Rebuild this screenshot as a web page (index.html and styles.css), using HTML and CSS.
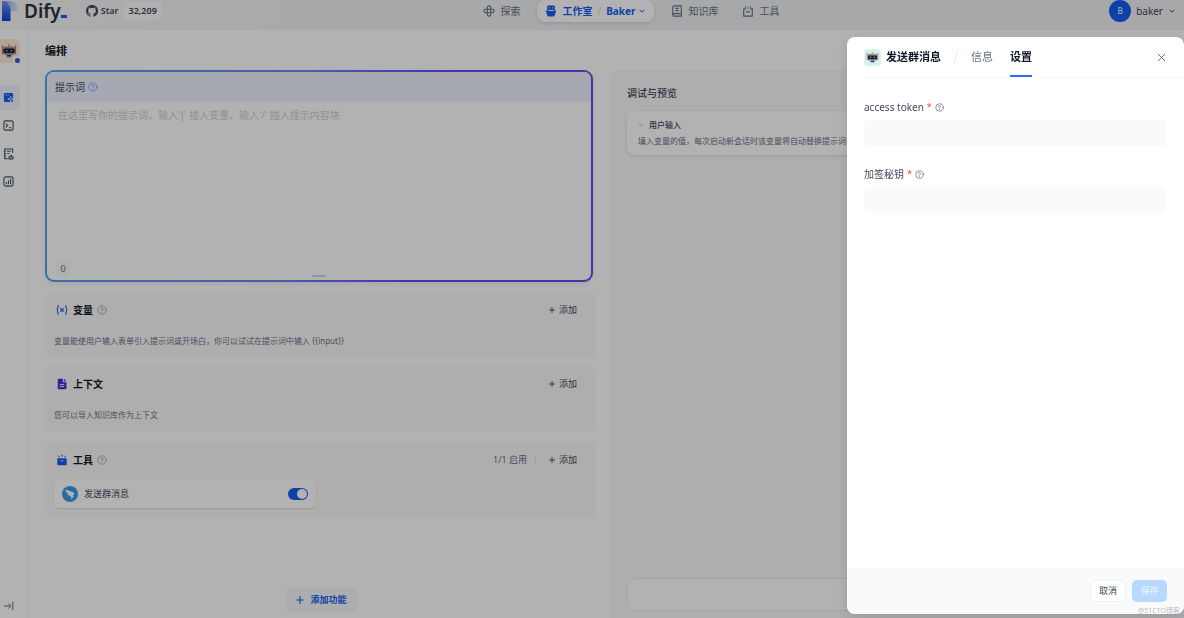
FILE: index.html
```html
<!DOCTYPE html>
<html lang="zh-CN">
<head>
<meta charset="utf-8">
<meta name="viewport" content="width=device-width, initial-scale=1">
<title>Dify</title>
<link rel="stylesheet" href="styles.css">
</head>
<body>
<svg class="defs" aria-hidden="true">
  <symbol id="help" viewBox="0 0 12 12"><g fill="none" stroke="currentColor" stroke-linecap="round"><circle cx="6" cy="6" r="5"/><path d="M4.6 4.8a1.4 1.4 0 1 1 2 1.3c-.4.2-.6.4-.6.8M6 8.600v.1"/></g></symbol>
  <symbol id="plus" viewBox="0 0 12 12"><path d="M6 1.500v9M1.500 6h9" fill="none" stroke="currentColor" stroke-width="1.400"/></symbol>
  <symbol id="chevron" viewBox="0 0 12 12"><path d="M2.500 4.200 6 7.800l3.500-3.600" fill="none" stroke="currentColor" stroke-width="1.500"/></symbol>
  <symbol id="bot" viewBox="0 0 16 16"><path d="M8 1v3" stroke="#f2b632" stroke-width="2"/><path d="M1.500 2.500V11M14.500 2.500V11" stroke="#e2574f" stroke-width="1.200"/><rect x="2" y="3.500" width="12" height="8.500" rx="2" fill="#8b9aab"/><path d="M4.500 12h7l-1.500 3H6z" fill="#bcc5d0"/><rect x="2.500" y="5.500" width="11" height="4.500" rx="1.500" fill="#18222f"/><circle cx="5.800" cy="7.800" r=".9" fill="#67b5c5"/><circle cx="10.200" cy="7.800" r=".9" fill="#67b5c5"/><path d="M6 12.800h4" stroke="#27324a" stroke-width="1.400"/></symbol>
  <symbol id="toolbox" viewBox="0 0 14 14"><path d="M2 4.500h2.500M9.500 4.500H12V13H2V4.500M5 8h4M7 4.500V2.500M4.500 3 3.700 1.500M9.500 3l.8-1.500" fill="none" stroke="currentColor" stroke-width="1.300" stroke-linejoin="round"/></symbol>
</svg>

<header class="topbar">
  <div class="brand">
    <a class="logo" href="#" aria-label="Dify">
      <svg width="17" height="22" viewBox="0 0 17 22" aria-hidden="true">
        <defs><linearGradient id="g1" x1="0" y1="0" x2="0" y2="1"><stop offset="0" stop-color="#6f95f5"/><stop offset="1" stop-color="#0b3fd0"/></linearGradient><linearGradient id="g2" x1="0" y1="0" x2="1" y2="0"><stop offset="0" stop-color="#7d9ef0"/><stop offset="1" stop-color="#e8edf9"/></linearGradient></defs>
        <path d="M0 1h7c6 0 10 4 10 10H8V21H0z" fill="url(#g2)"/><path d="M0 1h3c4 3 5.500 6 5.500 10v10H0z" fill="url(#g1)"/>
      </svg>
      <span class="wordmark">Dify</span><span class="cursor"></span>
    </a>
    <a class="star" href="#">
      <svg width="12" height="12" viewBox="0 0 16 16" aria-hidden="true"><path fill="currentColor" d="M8 0C3.580 0 0 3.580 0 8c0 3.540 2.290 6.530 5.470 7.590.4.070.55-.17.55-.38v-1.340c-2.230.48-2.700-1.070-2.700-1.070-.36-.92-.89-1.170-.89-1.170-.73-.5.050-.49.050-.49.810.06 1.230.83 1.230.83.720 1.230 1.880.87 2.340.67.070-.52.280-.87.5-1.070-1.780-.2-3.640-.89-3.640-3.950 0-.87.310-1.590.82-2.150-.08-.2-.36-1.020.08-2.120 0 0 .67-.21 2.200.82a7.600 7.600 0 0 1 4 0c1.530-1.040 2.200-.82 2.200-.82.440 1.100.160 1.920.080 2.120.51.560.820 1.270.820 2.150 0 3.070-1.870 3.750-3.650 3.950.290.250.540.730.540 1.480v2.150c0 .21.150.46.550.38A8 8 0 0 0 8 0z"/></svg>
      <span>Star</span><span class="count">32,209</span>
    </a>
  </div>
  <nav class="nav">
    <a class="nav-item" href="#"><svg width="12" height="12" viewBox="0 0 14 14" fill="none" stroke="currentColor" stroke-width="1.300" aria-hidden="true"><path d="M5 5V3a2 2 0 1 1 4 0v2h2a2 2 0 1 1 0 4H9v2a2 2 0 1 1-4 0V9H3a2 2 0 1 1 0-4zM5 5h4v4H5z"/></svg>探索</a>
    <div class="nav-pill">
      <a href="#"><svg width="12" height="12" viewBox="0 0 14 14" aria-hidden="true"><path d="M2.500 2A1.500 1.500 0 0 1 4 .5h6A1.500 1.500 0 0 1 11.500 2v4h-9z" fill="currentColor"/><path d="M1 6.500h12v2h-1v1A4 4 0 0 1 8 13.500H6a4 4 0 0 1-4-4v-1H1z" fill="currentColor"/><path d="M5 2.500v1.500M9 2.500v1.500M4 6.300h6" stroke="#fff"/></svg>工作室</a>
      <span class="slash">/</span>
      <button type="button">Baker<svg width="8" height="8" aria-hidden="true"><use href="#chevron"/></svg></button>
    </div>
    <a class="nav-item knowledge" href="#"><svg width="12" height="12" viewBox="0 0 14 14" fill="none" stroke="currentColor" stroke-width="1.300" aria-hidden="true"><path d="M12 10V1H3.500A1.500 1.500 0 0 0 2 2.500v9A1.500 1.500 0 0 0 3.500 13H12v-3H3.500A1.500 1.500 0 0 0 2 11.500M5 4h4M5 6.500h4"/></svg>知识库</a>
    <a class="nav-item" href="#"><svg width="12" height="12" aria-hidden="true"><use href="#toolbox"/></svg>工具</a>
  </nav>
  <button class="account" type="button"><span class="avatar">B</span>baker<svg width="8" height="8" aria-hidden="true"><use href="#chevron"/></svg></button>
</header>

<div class="shell">
  <aside class="rail">
    <div class="app-icon"><svg width="16" height="16" aria-hidden="true"><use href="#bot"/></svg><span class="app-mode"></span></div>
    <nav class="rail-nav">
      <a class="active" href="#" aria-label="编排"><svg width="11" height="11" viewBox="0 0 12 12" aria-hidden="true"><path d="M2.500 1h7A1.500 1.500 0 0 1 11 2.500v7A1.500 1.500 0 0 1 9.500 11h-7A1.500 1.500 0 0 1 1 9.500v-7A1.500 1.500 0 0 1 2.500 1z" fill="currentColor"/><path d="M3 3.200h1.500M5.500 3.200h.8" stroke="#fff"/><path d="m8.500 4.500.8 2.400 2.400.8-2.400.8-.8 2.400-.8-2.400-2.400-.8 2.400-.8z" fill="currentColor" stroke="#fff" stroke-width=".8"/></svg></a>
      <a href="#" aria-label="访问 API"><svg width="11" height="11" viewBox="0 0 12 12" fill="none" stroke="currentColor" stroke-width="1.200" aria-hidden="true"><rect x="1" y="1" width="10" height="10" rx="1.500"/><path d="m3 4 2 2-2 2M6.500 8.500H9"/></svg></a>
      <a href="#" aria-label="日志与标注"><svg width="11" height="12" viewBox="0 0 12 13" fill="none" stroke="currentColor" stroke-width="1.200" aria-hidden="true"><path d="M10.500 5V1H2v10.500h3M1 3.500h2M1 6h2M1 8.500h2M4.500 3.500h4M4.500 6H7"/><path d="M6.500 11.800V9.700h1L8.500 8c1-.2 1.200.7.800 1.700h1.900l-.5 2.100z"/></svg></a>
      <a href="#" aria-label="概览"><svg width="11" height="11" viewBox="0 0 12 12" fill="none" stroke="currentColor" stroke-width="1.200" aria-hidden="true"><rect x="1" y="1" width="10" height="10" rx="2"/><path d="M3.700 6.500V9M6 5v4M8.300 3v6"/></svg></a>
    </nav>
    <button class="expand" type="button" aria-label="展开"><svg width="10" height="10" viewBox="0 0 12 12" fill="none" stroke="currentColor" stroke-width="1.200" aria-hidden="true"><path d="M0 6h8M5 2.800 8.200 6 5 9.200M10.500 1v10"/></svg></button>
  </aside>

  <main class="main">
    <h1 class="page-title">编排</h1>
    <div class="columns">
      <div class="config">
        <section class="prompt">
          <div class="prompt-inner">
            <label class="prompt-head" for="prompt">提示词<svg width="10" height="10" aria-hidden="true"><use href="#help"/></svg></label>
            <textarea id="prompt" placeholder="在这里写你的提示词，输入'{' 插入变量、输入'/' 插入提示内容块"></textarea>
            <div class="prompt-foot"><span class="chars">0</span><span class="grip"></span></div>
          </div>
        </section>

        <section class="card">
          <div class="card-head">
            <svg class="indigo" width="12" height="12" viewBox="0 0 14 14" fill="none" stroke="currentColor" stroke-width="1.400" aria-hidden="true"><path d="M3.500 2C2 2 2 3.500 2 4.500S1.500 7 .7 7C1.500 7 2 8.500 2 9.500S2 12 3.500 12M10.500 2C12 2 12 3.500 12 4.500s.5 2.500 1.300 2.500C12.500 7 12 8.500 12 9.500s0 2.500-1.500 2.500M5 5l4 4M9 5 5 9"/></svg>
            <h2>变量</h2><svg class="hint" width="10" height="10" aria-hidden="true"><use href="#help"/></svg>
            <div class="card-actions"><button class="add" type="button"><svg width="8" height="8" aria-hidden="true"><use href="#plus"/></svg>添加</button></div>
          </div>
          <p>变量能使用户输入表单引入提示词或开场白，你可以试试在提示词中输入 {{input}}</p>
        </section>

        <section class="card">
          <div class="card-head">
            <svg class="violet" width="12" height="12" viewBox="0 0 14 14" aria-hidden="true"><path d="M3.500.8H8v4.200h4.200v6.700a1.500 1.500 0 0 1-1.500 1.500H3.500A1.500 1.500 0 0 1 2 11.700V2.300A1.500 1.500 0 0 1 3.500.8zM9.200.9 12 3.800H9.200z" fill="currentColor"/><path d="M4.500 7.500h5M4.500 10h5" stroke="#fff" stroke-width="1.100"/></svg>
            <h2>上下文</h2>
            <div class="card-actions"><button class="add" type="button"><svg width="8" height="8" aria-hidden="true"><use href="#plus"/></svg>添加</button></div>
          </div>
          <p>您可以导入知识库作为上下文</p>
        </section>

        <section class="card tools">
          <div class="card-head">
            <svg class="blue" width="12" height="12" viewBox="0 0 14 14" aria-hidden="true"><path d="M1.500 5h11v7a1 1 0 0 1-1 1h-9a1 1 0 0 1-1-1z" fill="currentColor"/><path d="M5.500 8h3" stroke="#fff"/><path d="M4 3.500 3 2M7 2.800V.8M10 3.500l1-1.500" stroke="currentColor" stroke-width="1.300"/></svg>
            <h2>工具</h2><svg class="hint" width="10" height="10" aria-hidden="true"><use href="#help"/></svg>
            <div class="card-actions"><span class="enabled">1/1 启用</span><button class="add" type="button"><svg width="8" height="8" aria-hidden="true"><use href="#plus"/></svg>添加</button></div>
          </div>
          <div class="tool">
            <svg width="16" height="16" viewBox="0 0 16 16" aria-hidden="true"><circle cx="8" cy="8" r="8" fill="#3a9be8"/><path d="M3.500 3.500c3 1.200 5.500 1.800 8.500 3.200.6.300.3 1-.1 1.700L10.800 10H12l-3 3.500.6-2.300H8.300l.5-1.200C6.500 9.800 5.500 8.700 5.200 7.800l1.300.1C4.500 7 3.700 5.500 3.500 3.500z" fill="#fff"/></svg>
            <label for="tool-on">发送群消息</label>
            <input id="tool-on" class="switch" type="checkbox" role="switch" checked>
          </div>
        </section>

        <button class="add-feature" type="button"><svg width="10" height="10" aria-hidden="true"><use href="#plus"/></svg>添加功能</button>
      </div>

      <section class="preview">
        <h2>调试与预览</h2>
        <div class="inputs-card">
          <h3><svg width="6" height="6" aria-hidden="true"><use href="#chevron"/></svg>用户输入</h3>
          <p>填入变量的值，每次启动新会话时该变量将自动替换提示词中的变量。</p>
        </div>
        <input class="chat" type="text" aria-label="消息">
      </section>
    </div>
  </main>
</div>

<div class="backdrop">
  <div class="drawer" role="dialog" aria-label="发送群消息">
    <div class="drawer-head">
      <span class="drawer-icon"><svg width="13" height="13" aria-hidden="true"><use href="#bot"/></svg></span>
      <h2>发送群消息</h2>
      <svg class="divider" width="6" height="14" viewBox="0 0 6 14" aria-hidden="true"><path d="M5 0 1 14" stroke="#e7e9ec"/></svg>
      <button class="tab" type="button">信息</button>
      <button class="tab active" type="button">设置</button>
      <button class="close" type="button" aria-label="关闭"><svg width="9" height="9" viewBox="0 0 9 9" aria-hidden="true"><path d="m1 1 7 7M8 1 1 8" stroke="currentColor"/></svg></button>
    </div>
    <form class="form">
      <div class="field">
        <label for="token">access token <span class="req">*</span><svg width="9" height="9" aria-hidden="true"><use href="#help"/></svg></label>
        <input id="token" type="text">
      </div>
      <div class="field">
        <label for="secret">加签秘钥 <span class="req">*</span><svg width="9" height="9" aria-hidden="true"><use href="#help"/></svg></label>
        <input id="secret" type="text">
      </div>
    </form>
    <div class="drawer-foot">
      <button class="cancel" type="button">取消</button>
      <button class="save" type="button">保存</button>
    </div>
  </div>
  <span class="watermark">@51CTO博客</span>
</div>
</body>
</html>
```
FILE: styles.css
```css
* { box-sizing: border-box; }
html, body { height: 100%; }
body {
  margin: 0;
  display: flex;
  flex-direction: column;
  overflow: hidden;
  background: #fff;
  color: #414a5a;
  font: 10px/16px "Noto Sans", "Noto Sans CJK SC", sans-serif;
}
h1, h2, h3, p { margin: 0; font-size: inherit; }
a { color: inherit; text-decoration: none; }
button { border: 0; padding: 0; background: none; color: inherit; font: inherit; }
input, textarea { font: inherit; }
svg { flex: none; }
.defs { position: absolute; width: 0; height: 0; }

.topbar {
  flex: none;
  display: flex;
  justify-content: space-between;
  align-items: center;
  height: 30px;
  padding: 0 8px 8px 2px;
  background: linear-gradient(90deg, #f6f6f8, #f0f1f4 50%, #f1f1f4);
}
.brand, .logo, .star, .nav, .nav-item, .nav-pill, .nav-pill a, .nav-pill button, .account { display: flex; align-items: center; }
.brand { gap: 19px; }
.wordmark { margin-left: 5px; color: #2c3340; font-size: 19px; line-height: 22px; font-weight: 600; }
.cursor { align-self: flex-end; width: 6px; height: 3px; margin-bottom: 4px; background: #155eef; }
.star { gap: 3px; font-size: 9px; font-weight: 600; }
.count { margin-left: 2px; padding: 1px 5px; border-radius: 3px; background: #fcfcfd; }
.nav { gap: 17px; margin-right: 8px; color: #667085; }
.nav-item { gap: 5px; }
.knowledge { margin-right: 7px; }
.nav-pill { gap: 5px; height: 22px; padding: 0 8px; border-radius: 8px; background: #fff; box-shadow: 0 1px 4px #10182826; color: #155eef; font-weight: 700; }
.nav-pill a { gap: 5px; }
.nav-pill button { gap: 3px; }
.slash { color: #d0d5dd; font-weight: 400; }
.account { gap: 5px; }
.avatar { width: 22px; height: 22px; border-radius: 50%; background: #155eef; color: #fff; font-size: 8px; line-height: 22px; text-align: center; }

.shell { flex: 1; min-height: 0; display: flex; }
.rail { flex: none; width: 29px; display: flex; flex-direction: column; border-right: 1px solid #f1f2f4; color: #475467; }
.app-icon { position: relative; width: 20px; height: 24px; margin-top: 9px; padding: 4px 1px; border-radius: 0 6px 6px 0; background: #ffead5; }
.app-mode { position: absolute; right: -2px; bottom: -2px; width: 9px; height: 9px; border: 2px solid #fff; border-radius: 50%; background: #444ce7; }
.rail-nav { display: flex; flex-direction: column; gap: 3px; margin-top: 22px; }
.rail-nav a { display: flex; align-items: center; width: 20px; height: 25px; padding-left: 3px; border-radius: 0 5px 5px 0; }
.rail-nav .active { background: #f0f5fe; color: #155eef; }
.expand { width: 18px; height: 16px; margin: auto 0 3px; color: #667085; }

.main { flex: 1; min-width: 0; display: flex; flex-direction: column; padding-left: 16px; }
.page-title { margin: 13px 0 11px; color: #101828; font-size: 11px; }
.columns { flex: 1; min-height: 0; display: grid; grid-template-columns: 48fr 50fr; gap: 14px; }
.config { display: flex; flex-direction: column; gap: 10px; }
.prompt { margin-right: 3px; padding: 2px; border-radius: 9px; background: linear-gradient(100deg, #53a5f0, #6f84f5 45%, #6548f0 70%); box-shadow: 0 2px 4px #10182812; }
.prompt-inner { display: flex; flex-direction: column; height: 208px; border-radius: 7px; background: #fff; overflow: hidden; }
.prompt-head { display: flex; align-items: center; gap: 3px; height: 30px; padding: 0 8px; background: #eef2ff; }
.prompt-head svg { color: #8098f9; }
.prompt textarea { flex: 1; padding: 5px 11px; border: 0; outline: 0; resize: none; background: none; }
.prompt textarea::placeholder { color: #cbd0d8; }
.prompt-foot { display: grid; grid-template-columns: 1fr auto 1fr; align-items: end; height: 24px; padding: 0 9px 3px; }
.chars { width: 14px; border-radius: 5px; background: #f8f9fa; color: #667085; font-size: 9px; text-align: center; }
.grip { width: 14px; height: 2px; border-radius: 1px; background: #d0d5dd; }

.card { min-height: 66px; padding: 10px 19px 8px 9px; border-radius: 8px; background: #fafafb; }
.card + .card { margin-top: -2px; }
.card.tools { min-height: 76px; margin-top: 0; }
.card-head { display: flex; align-items: center; gap: 4px; padding-left: 2px; }
.card-head h2 { margin-left: 1px; color: #101828; }
.card p { margin-top: 15px; color: #667085; font-size: 8px; }
.hint { color: #98a2b3; }
.indigo { color: #3568ef; }
.violet { color: #5925dc; }
.blue { color: #155eef; }
.card-actions { display: flex; align-items: center; margin-left: auto; font-size: 9px; }
.enabled { margin-right: 12px; padding-right: 8px; border-right: 1px solid #e4e7ec; line-height: 10px; color: #667085; }
.add { display: flex; align-items: center; gap: 3px; }
.tool { display: flex; align-items: center; gap: 6px; width: 50%; height: 29px; margin-top: 11px; padding: 0 8px; border-radius: 5px; background: #fff; box-shadow: 0 1px 2px #1018281f; font-size: 9px; }
.switch { appearance: none; display: flex; justify-content: flex-end; width: 20px; height: 12px; margin: 0 0 0 auto; padding: 1px; border-radius: 6px; background: #155eef; }
.switch::before { content: ""; width: 10px; height: 10px; border-radius: 50%; background: #fff; }
.switch:not(:checked) { justify-content: flex-start; background: #d0d5dd; }
.add-feature { display: flex; align-items: center; gap: 6px; align-self: center; height: 24px; margin: auto 0 6px; padding: 0 10px; border-radius: 6px; background: #f7f8fb; color: #155eef; font-size: 9px; font-weight: 700; }

.preview { display: flex; flex-direction: column; min-width: 0; padding: 14px 16px 7px; border: solid #f4f5f6; border-width: 1px 0 0 1px; border-radius: 10px 0 0; background: #fafafb; }
.preview h2 { font-weight: 500; }
.inputs-card { margin-top: 10px; padding: 6px 11px; border-radius: 8px; background: #fff; box-shadow: 0 1px 4px #10182820; font-size: 8px; white-space: nowrap; overflow: hidden; }
.inputs-card h3 { display: flex; align-items: center; gap: 5px; font-weight: 500; }
.inputs-card h3 svg { color: #98a2b3; }
.inputs-card p { color: #667085; }
.chat { width: 100%; height: 33px; margin-top: auto; border: 1px solid #eceef0; border-radius: 8px; background: #fff; }

.backdrop { position: fixed; inset: 0; display: flex; justify-content: flex-end; padding: 37px 0 4px; background: #0000004d; }
.drawer { display: flex; flex-direction: column; width: 337px; border-radius: 8px; background: #fff; box-shadow: 0 4px 12px #10182826; overflow: hidden; }
.drawer-head { display: flex; align-items: center; height: 41px; margin-left: 17px; padding-right: 18px; border-bottom: 1px solid #f7f8f9; font-size: 11px; }
.drawer-icon { display: grid; place-items: center; width: 17px; height: 17px; border-radius: 4px; background: #d5f5ec; }
.drawer-head h2 { margin-left: 5px; color: #101828; }
.divider { margin: 0 12px; }
.tab { height: 40px; margin-right: 17px; border: solid transparent; border-width: 2px 0; color: #667085; }
.tab.active { border-bottom-color: #2970ff; color: #101828; font-weight: 700; }
.close { display: flex; align-items: center; height: 16px; margin-left: auto; color: #667085; }
.form { flex: 1; display: flex; flex-direction: column; gap: 20px; padding: 21px 17px; }
.field label { display: flex; align-items: center; gap: 3px; }
.field svg { color: #667085; }
.req { color: #f04438; font-size: 9px; }
.field input { display: block; width: 100%; height: 26px; margin-top: 5px; border: 0; border-radius: 4px; background: #f9fafb; }
.drawer-foot { display: flex; justify-content: flex-end; gap: 6px; padding: 12px 17px; background: #f9fafb; }
.drawer-foot button { height: 22px; border-radius: 5px; font-size: 9px; }
.cancel { width: 36px; border: 1px solid #eef0f2; background: #fff; }
.drawer-foot .save { width: 35px; background: #b9d8ff; color: #eef6ff; }
.watermark { position: absolute; right: 4px; bottom: 2px; color: #b8bbbf; font-size: 7px; line-height: 10px; }
```
